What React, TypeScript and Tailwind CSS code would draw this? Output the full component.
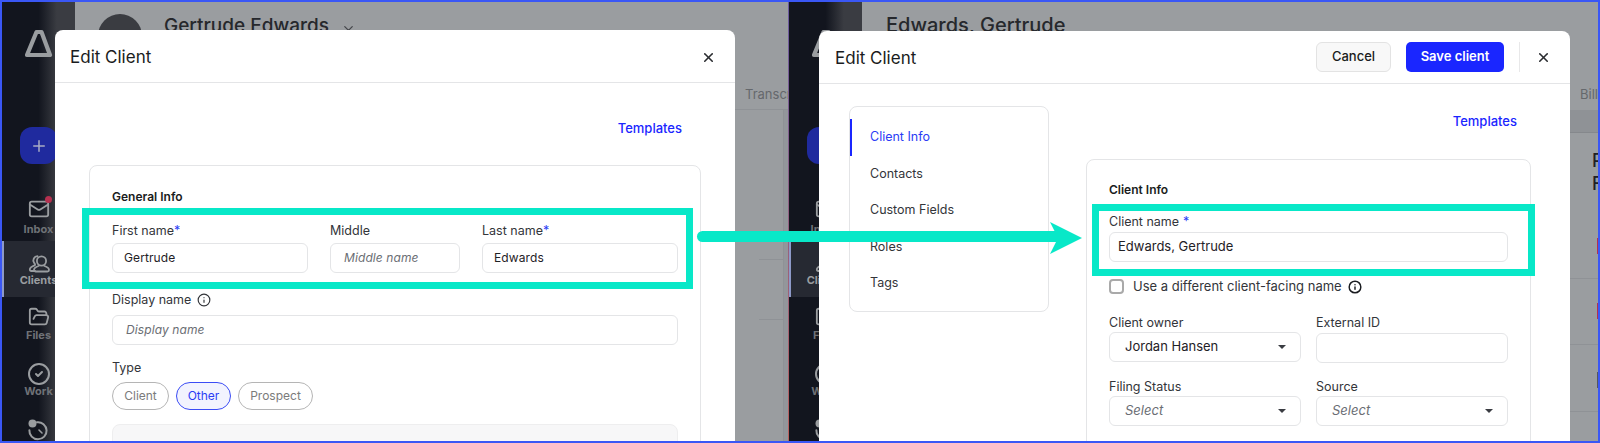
import { ChevronDown, CircleCheck, FolderOpen, Info, Mail, Plus, X } from "lucide-react";
import type { ReactNode } from "react";

const Logo = () => (
  <svg width="30" height="31" viewBox="0 0 30 31" fill="none">
    <path d="M11.5 4h5L25 27H2z" stroke="#9a9da0" strokeWidth="4.2" strokeLinejoin="round" />
  </svg>
);

const HistoryIcon = () => (
  <svg width="22" height="22" viewBox="0 0 22 22" fill="none">
    <path d="M9 3.2a8.6 8.6 0 1 1-7.6 8" stroke="#9a9da0" strokeWidth="2" strokeLinecap="round" />
    <circle cx="4.5" cy="4.5" r="4" fill="#9a9da0" />
    <path d="M11 11l3 3" stroke="#9a9da0" strokeWidth="1.6" strokeLinecap="round" />
  </svg>
);

const ClientsIcon = () => (
  <svg width="24" height="24" viewBox="0 0 24 24" fill="none" stroke="#9a9da0" strokeWidth="1.8" strokeLinejoin="round" strokeLinecap="round">
    <path d="M10.5 4.2a4.2 4.2 0 0 0-3.4 6.6c.5.8 1 1.2 1 2-.1 1-4 1.4-5 3.6-.5 1.200-.3 2.600 1 2.600h4" />
    <circle cx="14.500" cy="9" r="4.600" />
    <path d="M11.500 14c-2.500.8-4.500 2-4.500 4 0 1 .6 1.500 1.500 1.500h12c1 0 1.500-.5 1.500-1.500 0-2-2-3.200-4.500-4" />
  </svg>
);

const navLabelClass = "text-[11px] leading-[14px] font-bold text-[#6f7277]";

const Sidebar = () => (
  <aside className="w-[73px] shrink-0 h-full flex flex-col items-center bg-gradient-to-r from-[#12151e] from-50% to-[#3a3c42] to-75%">
    <div className="pt-[26px] pl-[23px] h-[125px] w-full">
      <Logo />
    </div>
    <div className="self-start ml-[18px] w-[37px] h-[37px] rounded-xl bg-[#1f2a9e] flex items-center justify-center">
      <Plus size={18} color="#a8acc4" />
    </div>
    <div className="relative mt-[34px] h-[22px]">
      <Mail size={22} color="#9a9da0" />
      <span className="absolute -top-[2px] -right-[2px] w-[7px] h-[7px] rounded-full bg-[#b5304f]" />
    </div>
    <span className={`${navLabelClass} mt-[2px]`}>Inbox</span>
    <div className="mt-[5px] h-[56px] w-full bg-[#262932] border-l-2 border-[#8d99c8] pt-[11px] pr-[2px] flex flex-col items-center text-[11px] leading-[14px] font-bold text-[#9a9da0]">
      <ClientsIcon />
      <span className="-mt-[3px]">Clients</span>
    </div>
    <div className="mt-[9px]">
      <FolderOpen size={22} color="#9a9da0" />
    </div>
    <span className={navLabelClass}>Files</span>
    <div className="mt-[20px]">
      <CircleCheck size={24} color="#9a9da0" />
    </div>
    <span className={`${navLabelClass} -mt-[2px]`}>Work</span>
    <div className="mt-[21px]">
      <HistoryIcon />
    </div>
  </aside>
);

const Label = ({ children }: { children: ReactNode }) => (
  <div className="text-[12.5px] leading-[16px] text-[#33353a] flex items-center gap-[6px]">{children}</div>
);

const Req = () => <span className="text-[#2a3cf5] -ml-[6px]">*</span>;

const TextInput = ({ value, placeholder, large }: { value?: string; placeholder?: string; large?: boolean }) => (
  <div
    className={
      large
        ? "h-[30px] rounded-md border border-[#e4e5e7] flex items-center pl-[8px] text-[13px] text-[#1f2126]"
        : "h-[30px] rounded-md border border-[#e4e5e7] flex items-center pl-[11px] text-[12px] tracking-[0.1px] text-[#1f2126]"
    }
  >
    {value ?? <span className="italic text-[#6b6e74] pl-[2px]">{placeholder}</span>}
  </div>
);

const SelectInput = ({ value, placeholder }: { value?: string; placeholder?: string }) => (
  <div className="h-[30px] rounded-md border border-[#e4e5e7] flex items-center justify-between pl-[15px] pr-[14px] text-[13px] text-[#1f2126]">
    {value ?? <span className="italic text-[#6b6e74]">{placeholder}</span>}
    <span className="w-0 h-0 border-x-[4px] border-x-transparent border-t-[4px] border-t-[#3a3c42]" />
  </div>
);

const Pill = ({ label, width, active }: { label: string; width: string; active?: boolean }) => (
  <div
    className={
      active
        ? `${width} h-[28px] rounded-full border border-[#3b4cf5] bg-[#f2f3fe] text-[#2a3cf5] text-[12px] flex items-center justify-center`
        : `${width} h-[28px] rounded-full border border-[#b5b5b5] text-[#7b7b7b] text-[12px] flex items-center justify-center`
    }
  >
    {label}
  </div>
);

const Highlight = ({ className }: { className: string }) => (
  <div className={`absolute border-[7px] border-[#08e8c8] ${className}`} />
);

const LeftPanel = () => (
  <section className="relative w-[786px] shrink-0 h-full flex overflow-hidden bg-[#9a9da0]">
    <Sidebar />
    <div className="flex-1 relative">
      <div className="h-[108px] border-b border-[#8f9296] pt-[12px] pl-[23px] flex">
        <div className="w-[44px] h-[44px] rounded-full bg-[#3a3c41]" />
        <span className="ml-[22px] text-[19px] leading-[24px] font-medium text-[#26282c]">Gertrude Edwards</span>
        <ChevronDown size={15} color="#44464a" className="ml-[12px] mt-[7px]" />
      </div>
      <div className="absolute top-[83px] left-[670px] text-[13px] text-[#65686c]">Transcripts</div>
      <div className="flex h-full">
        <div className="w-[684px] shrink-0" />
        <div className="w-[25px] border-r border-[#8f9296]">
          <div className="h-[150px] border-b border-[#8f9296]" />
          <div className="h-[60px] border-b border-[#8f9296]" />
        </div>
        <div className="w-[24px] border-r border-[#8f9296] bg-[#93969b]" />
      </div>
    </div>

    <div className="absolute left-[53px] top-[28px] w-[680px] h-[440px] bg-white rounded-t-lg">
      <header className="h-[53px] pt-[3px] border-b border-[#e4e5e7] flex items-center justify-between pl-[15px] pr-[19px]">
        <h2 className="text-[17px] text-[#1a1c20]">Edit Client</h2>
        <X size={15} color="#2a2c30" strokeWidth={2.5} />
      </header>
      <div className="h-[82px] flex justify-end pr-[53px] pt-[36px]">
        <span className="text-[13px] leading-[18px] font-medium text-[#1a26ff]">Templates</span>
      </div>
      <div className="relative mx-[34px] h-[320px] rounded-t-lg border border-[#e4e5e7] pl-[22px] pr-[22px] pt-[23px]">
        <div className="text-[12px] leading-[16px] font-semibold text-[#1a1c20]">General Info</div>
        <div className="mt-[18px] flex gap-[22px]">
          <div className="w-[196px]">
            <Label>First name<Req /></Label>
            <div className="mt-[4px]"><TextInput value="Gertrude" /></div>
          </div>
          <div className="w-[130px]">
            <Label>Middle</Label>
            <div className="mt-[4px]"><TextInput placeholder="Middle name" /></div>
          </div>
          <div className="flex-1">
            <Label>Last name<Req /></Label>
            <div className="mt-[4px]"><TextInput value="Edwards" /></div>
          </div>
        </div>
        <div className="mt-[19px]">
          <Label>Display name <Info size={14} color="#33353a" /></Label>
          <div className="mt-[7px]"><TextInput placeholder="Display name" /></div>
        </div>
        <div className="mt-[15px]">
          <Label>Type</Label>
          <div className="mt-[6px] flex gap-[7px]">
            <Pill label="Client" width="w-[57px]" />
            <Pill label="Other" width="w-[55px]" active />
            <Pill label="Prospect" width="w-[75px]" />
          </div>
        </div>
        <div className="mt-[14px] h-[40px] rounded-t-lg border border-[#eeeeef] bg-[#f7f7f8]" />
        <Highlight className="-left-[8px] top-[42px] w-[611px] h-[81px]" />
      </div>
    </div>
  </section>
);

const RightPanel = () => (
  <section className="relative flex-1 h-full flex overflow-hidden bg-[#9a9da0]">
    <Sidebar />
    <div className="flex-1 relative">
      <div className="h-[108px] pt-[11px] pl-[24px]">
        <span className="text-[20px] leading-[24px] font-medium text-[#26282c]">Edwards, Gertrude</span>
      </div>
      <div className="h-[23px] bg-[#8f9296] border-b border-[#85888c]" />
      <div className="h-[146px] border-b border-[#8f9296]" />
      <div className="h-[66px] border-b border-[#8f9296]" />
      <div className="h-[67px] border-b border-[#8f9296]" />
      <div className="absolute top-[83px] left-[718px] text-[13px] text-[#65686c]">Billing</div>
      <div className="absolute top-[147px] left-[730px] text-[18px] leading-[23px] font-medium text-[#1f2126]">
        P
        <br />
        F
      </div>
      <div className="absolute top-[236px] left-[735px] w-[4px] h-[16px] bg-[#b5304f]" />
      <div className="absolute top-[301px] left-[735px] w-[4px] h-[16px] bg-[#b5304f]" />
      <div className="absolute top-[370px] left-[735px] w-[4px] h-[16px] bg-[#55585e]" />
    </div>

    <div className="absolute left-[30px] top-[29px] w-[751px] h-[440px] bg-white rounded-t-lg">
      <header className="h-[53px] border-b border-[#e4e5e7] flex items-center pl-[16px] pr-[19px]">
        <h2 className="text-[17px] pt-[3px] text-[#1a1c20] mr-auto">Edit Client</h2>
        <button className="h-[30px] w-[75px] rounded-md border border-[#e3e3e3] bg-[#f8f8f8] text-[13px] font-medium text-[#1a1c20]">
          Cancel
        </button>
        <button className="ml-[15px] h-[30px] w-[98px] rounded-[5px] bg-[#1a26ff] text-[13px] font-semibold text-white">
          Save client
        </button>
        <div className="ml-[15px] w-px h-[30px] bg-[#e8e8e9]" />
        <X size={15} color="#2a2c30" strokeWidth={2.5} className="ml-[16px]" />
      </header>
      <div className="flex">
        <nav className="ml-[30px] mt-[22px] w-[200px] h-[206px] rounded-lg border border-[#e4e5e7] pt-[12px] text-[12.5px] text-[#33353a] shrink-0">
          <div className="h-[37px] border-l-2 border-[#1a26ff] pl-[18px] flex items-center text-[#2a3cf5]">Client Info</div>
          <div className="h-[36px] pl-[20px] flex items-center">Contacts</div>
          <div className="h-[37px] pl-[20px] flex items-center">Custom Fields</div>
          <div className="h-[36px] pl-[20px] flex items-center">Roles</div>
          <div className="h-[36px] pl-[20px] flex items-center">Tags</div>
        </nav>
        <div className="ml-[37px] w-[445px]">
          <div className="h-[75px] pt-[28px] pr-[14px] flex justify-end">
            <span className="text-[13px] leading-[18px] font-medium text-[#1a26ff]">Templates</span>
          </div>
          <div className="relative h-[300px] rounded-t-lg border border-[#e4e5e7] px-[22px] pt-[22px]">
            <div className="text-[12px] leading-[16px] font-semibold text-[#1a1c20]">Client Info</div>
            <div className="mt-[16px]">
              <Label>Client name <span className="text-[#2a3cf5] -ml-[2px]">*</span></Label>
              <div className="mt-[2px]"><TextInput value="Edwards, Gertrude" large /></div>
            </div>
            <div className="mt-[15px] flex items-center text-[13px] text-[#33353a]">
              <div className="w-[15px] h-[15px] rounded-[4px] border-2 border-[#a9a9a9]" />
              <span className="ml-[9px]">Use a different client-facing name</span>
              <Info size={14} color="#1a1c20" strokeWidth={2.5} className="ml-[6px]" />
            </div>
            <div className="mt-[18px] grid grid-cols-[192px_192px] gap-x-[15px] gap-y-[16px]">
              <div>
                <Label>Client owner</Label>
                <div className="mt-[1px]"><SelectInput value="Jordan Hansen" /></div>
              </div>
              <div>
                <Label>External ID</Label>
                <div className="mt-[2px]"><TextInput value="" large /></div>
              </div>
              <div>
                <Label>Filing Status</Label>
                <div className="mt-[1px]"><SelectInput placeholder="Select" /></div>
              </div>
              <div>
                <Label>Source</Label>
                <div className="mt-[1px]"><SelectInput placeholder="Select" /></div>
              </div>
            </div>
            <Highlight className="left-[5px] top-[44px] w-[443px] h-[72px]" />
          </div>
        </div>
      </div>
    </div>
  </section>
);

export default function App() {
  return (
    <div className="relative w-[1600px] h-[443px] overflow-hidden flex border-2 border-[#3a57f5] bg-white font-['Inter',sans-serif]">
      <LeftPanel />
      <div className="w-px h-full bg-gradient-to-b from-[#6a5aa0] to-[#b9605c] shrink-0" />
      <RightPanel />
      {/* arrow between the two highlighted boxes */}
      <svg className="absolute left-[693px] top-[220px]" width="392" height="34" viewBox="0 0 392 34" fill="none">
        <path d="M7.500 14.500H362" stroke="#08e8c8" strokeWidth="11" strokeLinecap="round" />
        <path d="M355 0l32 16-32 16 8-16z" fill="#08e8c8" />
      </svg>
    </div>
  );
}
